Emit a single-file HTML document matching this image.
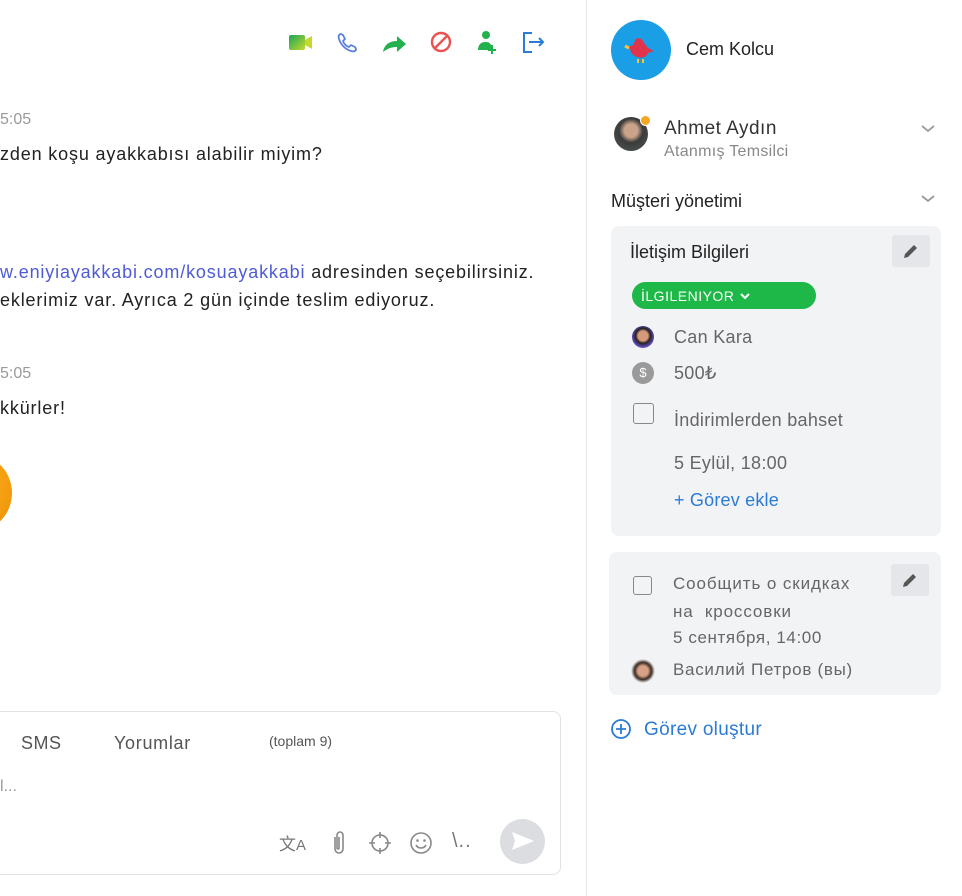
<!DOCTYPE html>
<html><head><meta charset="utf-8"><style>
*{box-sizing:border-box;margin:0;padding:0}
body{width:962px;height:896px;overflow:hidden;background:#fff;font-family:"Liberation Sans","DejaVu Sans",sans-serif;position:relative;color:#222}
.a{position:absolute;white-space:nowrap}
.ts{color:#9a9a9a;font-size:16px}
.msg{font-size:18px;color:#222;letter-spacing:0.85px}
.card{position:absolute;background:#f2f3f5;border-radius:8px}
.g{color:#666;letter-spacing:0.3px}
.pen{position:absolute;width:38px;height:32px;background:#e4e6e9;border-radius:3px}
.cb{position:absolute;width:21px;height:21px;border:1.5px solid #888;border-radius:3px}
</style></head><body>
<div class="a" style="left:586px;top:0;width:1px;height:896px;background:#e6e6e6"></div>

<svg class="a" style="left:288px;top:30px" width="270" height="26" viewBox="0 0 270 26">
<defs><linearGradient id="vg" x1="0" y1="0" x2="1" y2="1"><stop offset="0" stop-color="#1aa55a"/><stop offset="1" stop-color="#c5d82b"/></linearGradient></defs>
<rect x="1" y="5" width="16" height="15" rx="2" fill="url(#vg)"/><path d="M17 10l7-4v13l-7-4z" fill="#c5d82b"/>
<path d="M53 4c-2 0-3 2-2 5 2 6 6 10 12 12 3 1 5 0 5-2l-1-2-4-2-2 2c-3-1-5-3-6-6l2-2-2-4z" fill="none" stroke="#5b7fe0" stroke-width="1.8" stroke-linejoin="round"/>
<path d="M95 22c1-7 6-11 14-11V6l9 8-9 8v-5c-6 0-10 2-14 5z" fill="#22b14c"/>
<circle cx="153" cy="12" r="9" fill="none" stroke="#ea5350" stroke-width="2.4"/><path d="M147 18l12-12" stroke="#ea5350" stroke-width="2.4"/>
<circle cx="198" cy="5" r="4" fill="#22b14c"/><path d="M190 20c0-5 3-8 7-8s5 1 6 3v5z" fill="#22b14c"/><path d="M204 15v9M200 20h8" stroke="#22b14c" stroke-width="2"/>
<path d="M244 3h-8v19h8" fill="none" stroke="#2b7bd6" stroke-width="2"/><path d="M241 12h14M251 8l4 4-4 4" fill="none" stroke="#2b7bd6" stroke-width="2"/>
</svg>

<div class="a ts" style="left:0;top:111px">5:05</div>
<div class="a msg" style="left:0;top:144px">zden koşu ayakkabısı alabilir miyim?</div>
<div class="a msg" style="left:0;top:262px"><span style="color:#4f5bd5">w.eniyiayakkabi.com/kosuayakkabi</span> adresinden seçebilirsiniz.</div>
<div class="a msg" style="left:0;top:290px">eklerimiz var. Ayrıca 2 gün içinde teslim ediyoruz.</div>
<div class="a ts" style="left:0;top:365px">5:05</div>
<div class="a msg" style="left:0;top:398px">kkürler!</div>
<div class="a" style="left:-60px;top:455px;width:72px;height:76px;border-radius:50%;background:radial-gradient(circle at 40% 40%,#ffb52e,#f29a0c 70%,#d97e00)"></div>

<div class="a" style="left:-10px;top:711px;width:571px;height:164px;border:1px solid #e2e2e2;border-radius:8px"></div>
<div class="a" style="left:21px;top:733px;font-size:18px;color:#555;letter-spacing:0.5px">SMS</div>
<div class="a" style="left:114px;top:733px;font-size:18px;color:#555;letter-spacing:0.7px">Yorumlar</div>
<div class="a" style="left:269px;top:733px;font-size:14px;color:#555">(toplam 9)</div>
<div class="a" style="left:0;top:778px;font-size:16px;color:#999">l...</div>
<div class="a" style="left:279px;top:830px;font-size:17px;color:#777">文<span style="font-size:15px">A</span></div>
<svg class="a" style="left:328px;top:830px" width="22" height="26" viewBox="0 0 22 26"><path d="M7 7v12a4 4 0 008 0V5a3 3 0 00-6 0v13a1 1 0 002 0V7" fill="none" stroke="#888" stroke-width="1.6"/></svg>
<svg class="a" style="left:367px;top:830px" width="26" height="26" viewBox="0 0 26 26"><circle cx="13" cy="13" r="8" fill="none" stroke="#888" stroke-width="1.6"/><path d="M13 2v6M13 18v6M2 13h6M18 13h6" stroke="#888" stroke-width="1.6"/></svg>
<svg class="a" style="left:408px;top:830px" width="26" height="26" viewBox="0 0 26 26"><circle cx="13" cy="13" r="10" fill="none" stroke="#888" stroke-width="1.6"/><circle cx="9.5" cy="10.5" r="1.3" fill="#888"/><circle cx="16.5" cy="10.5" r="1.3" fill="#888"/><path d="M8 15c2 4 8 4 10 0" fill="none" stroke="#888" stroke-width="1.6"/></svg>
<div class="a" style="left:452px;top:830px;font-size:20px;color:#777;letter-spacing:1px">\..</div>
<div class="a" style="left:500px;top:819px;width:45px;height:45px;border-radius:50%;background:#dcdde0"></div>
<svg class="a" style="left:511px;top:830px" width="24" height="22" viewBox="0 0 24 22"><path d="M1 2l22 9-22 9 3-9z" fill="#fff"/></svg>

<div class="a" style="left:611px;top:20px;width:60px;height:60px;border-radius:50%;background:#1a9ee6"></div>
<svg class="a" style="left:624px;top:35px" width="34" height="32" viewBox="0 0 34 32"><path d="M4 12l5-2 3-6c3-2 7 0 8 4l4 5 6 3-6 2c-2 5-8 6-13 3-4-2-5-6-5-8z" fill="#e0344b"/><path d="M14 24v4M19 24v4" stroke="#f7c43a" stroke-width="2"/><path d="M1 11l4 2" stroke="#f7c43a" stroke-width="3"/></svg>
<div class="a" style="left:686px;top:39px;font-size:18px;color:#222">Cem Kolcu</div>

<div class="a" style="left:614px;top:117px;width:34px;height:34px;border-radius:50%;background:radial-gradient(circle at 50% 40%,#c9a48a 25%,#3b3b3b 45%,#4d5a55)"></div>
<div class="a" style="left:640px;top:115px;width:11px;height:11px;border-radius:50%;background:#f5a623;border:1px solid #fff"></div>
<div class="a" style="left:664px;top:118px;font-size:19px;color:#333;letter-spacing:0.5px">Ahmet Aydın</div>
<div class="a" style="left:664px;top:143px;font-size:16px;color:#888;letter-spacing:0.3px">Atanmış Temsilci</div>
<svg class="a" style="left:920px;top:124px" width="16" height="10" viewBox="0 0 16 10"><path d="M2 2l6 5 6-5" fill="none" stroke="#999" stroke-width="1.8"/></svg>
<div class="a" style="left:611px;top:191px;font-size:18px;color:#222">Müşteri yönetimi</div>
<svg class="a" style="left:920px;top:194px" width="16" height="10" viewBox="0 0 16 10"><path d="M2 2l6 5 6-5" fill="none" stroke="#999" stroke-width="1.8"/></svg>

<div class="card" style="left:611px;top:226px;width:330px;height:310px"></div>
<div class="a" style="left:630px;top:242px;font-size:18px;color:#222">İletişim Bilgileri</div>
<div class="pen" style="left:892px;top:235px"></div>
<svg class="a" style="left:902px;top:242px" width="18" height="18" viewBox="0 0 18 18"><path d="M2 16l1-4L12 3l3 3-9 9z" fill="#555"/></svg>
<div class="a" style="left:632px;top:282px;width:184px;height:27px;border-radius:14px;background:#1db847;color:#fff;font-size:14px;padding:6px 0 0 9px;letter-spacing:0.5px">İLGILENIYOR <svg width="12" height="9" viewBox="0 0 12 9"><path d="M2 2l4 4 4-4" fill="none" stroke="#fff" stroke-width="2"/></svg></div>
<div class="a" style="left:632px;top:326px;width:22px;height:22px;border-radius:50%;background:radial-gradient(circle at 50% 45%,#d49a7a 30%,#222 45%,#6a4cc8 70%)"></div>
<div class="a g" style="left:674px;top:327px;font-size:18px">Can Kara</div>
<div class="a" style="left:632px;top:362px;width:22px;height:22px;border-radius:50%;background:#9a9a9a;color:#fff;font-size:13px;text-align:center;line-height:22px">$</div>
<div class="a g" style="left:674px;top:363px;font-size:18px">500₺</div>
<div class="cb" style="left:633px;top:403px"></div>
<div class="a g" style="left:674px;top:410px;font-size:18px">İndirimlerden bahset</div>
<div class="a g" style="left:674px;top:453px;font-size:18px">5 Eylül, 18:00</div>
<div class="a" style="left:674px;top:490px;font-size:18px;color:#2b7bd6;letter-spacing:0.2px">+ Görev ekle</div>

<div class="card" style="left:609px;top:552px;width:332px;height:143px"></div>
<div class="pen" style="left:891px;top:564px"></div>
<svg class="a" style="left:901px;top:571px" width="18" height="18" viewBox="0 0 18 18"><path d="M2 16l1-4L12 3l3 3-9 9z" fill="#555"/></svg>
<div class="cb" style="left:633px;top:576px;width:19px;height:19px"></div>
<div class="a g" style="left:673px;top:570px;font-size:17px;line-height:28px;letter-spacing:0.9px">Сообщить о скидках<br>на&nbsp; кроссовки</div>
<div class="a g" style="left:673px;top:628px;font-size:17px;letter-spacing:0.6px">5 сентября, 14:00</div>
<div class="a" style="left:631px;top:659px;width:24px;height:24px;border-radius:50%;background:radial-gradient(circle at 50% 50%,#d6a184 30%,#3a2a22 50%,#eee 70%)"></div>
<div class="a g" style="left:673px;top:660px;font-size:17px;letter-spacing:0.7px">Василий Петров (вы)</div>

<svg class="a" style="left:610px;top:718px" width="22" height="22" viewBox="0 0 22 22"><circle cx="11" cy="11" r="9" fill="none" stroke="#2b7bd6" stroke-width="1.8"/><path d="M11 6v10M6 11h10" stroke="#2b7bd6" stroke-width="1.8"/></svg>
<div class="a" style="left:644px;top:719px;font-size:19px;color:#2b7bd6;letter-spacing:0.3px">Görev oluştur</div>
</body></html>
